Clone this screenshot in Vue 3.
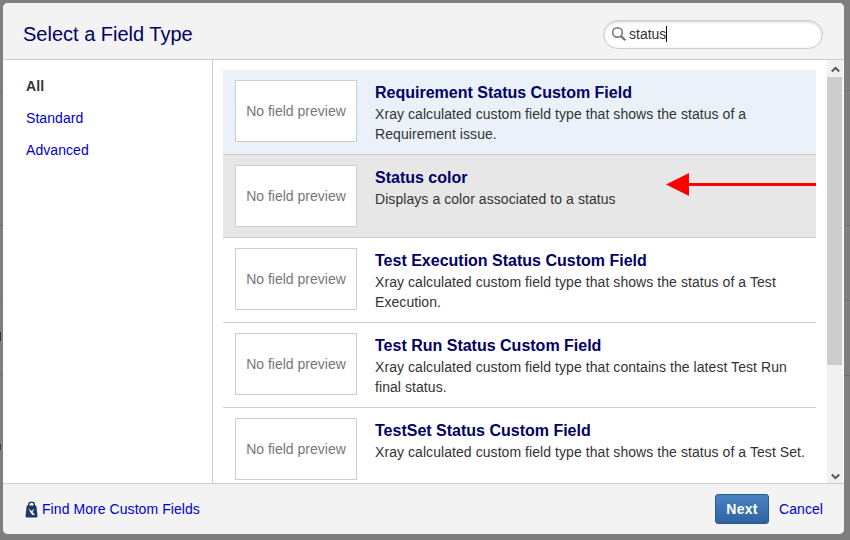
<script setup>
const rows = [
  { title: 'Requirement Status Custom Field', desc: 'Xray calculated custom field type that shows the status of a Requirement issue.', cls: 'selected' },
  { title: 'Status color', desc: 'Displays a color associated to a status', cls: 'hovered' },
  { title: 'Test Execution Status Custom Field', desc: 'Xray calculated custom field type that shows the status of a Test Execution.', cls: '' },
  { title: 'Test Run Status Custom Field', desc: 'Xray calculated custom field type that contains the latest Test Run final status.', cls: '' },
  { title: 'TestSet Status Custom Field', desc: 'Xray calculated custom field type that shows the status of a Test Set.', cls: '' },
]
</script>

<template>
  <div class="page">
    <span class="peek peek-a"></span>
    <span class="peek peek-b"></span>
    <div class="dialog">
      <header class="head">
        <h2>Select a Field Type</h2>
        <div class="search">
          <svg class="glass" width="16" height="16" viewBox="0 0 16 16">
            <circle cx="6.500" cy="6.500" r="4.800" fill="none" stroke="#707070" stroke-width="1.500" />
            <path d="M10 10l4.200 4.200" stroke="#707070" stroke-width="2.200" />
          </svg>
          <span class="q">status</span><span class="caret"></span>
        </div>
      </header>
      <div class="body">
        <nav class="side">
          <a class="cur">All</a>
          <a>Standard</a>
          <a>Advanced</a>
        </nav>
        <div class="main">
          <div class="list">
            <div v-for="r in rows" :key="r.title" class="row" :class="r.cls">
              <div class="preview">No field preview</div>
              <div class="info">
                <h3>{{ r.title }}</h3>
                <p>{{ r.desc }}</p>
              </div>
            </div>
          </div>
          <div class="bar">
            <div class="end top">
              <svg width="15" height="8" viewBox="0 0 15 8"><path d="M3.800 6.500l3.700-3.700 3.700 3.700" fill="none" stroke="#555" stroke-width="2" /></svg>
            </div>
            <div class="track"><div class="thumb"></div></div>
            <div class="end bottom">
              <svg width="15" height="8" viewBox="0 0 15 8"><path d="M3.800 1.500l3.700 3.700 3.700-3.700" fill="none" stroke="#555" stroke-width="2" /></svg>
            </div>
          </div>
          <svg class="arrow" width="152" height="26" viewBox="0 0 152 26">
            <path d="M0 12.500L23 1V11H150V14H23V24Z" fill="#ff0000" />
          </svg>
        </div>
      </div>
      <footer class="foot">
        <a class="more">
          <svg width="13" height="17" viewBox="0 0 13 17">
            <path d="M1.500 6Q1.500 4.500 3 4.200V3.500Q3 .5 6.500 .5T10 3.500V4.200Q11.500 4.500 11.500 6L12.500 15Q12.500 16.500 11 16.500H2Q.5 16.500 .5 15Z" fill="#1d3a66" />
            <path d="M4.500 4.500V3.500Q4.500 1.800 6.500 1.800T8.500 3.500V4.500Z" fill="#fff" />
            <path d="M3.500 7.500l3 2.500 3-2.500-2 3.500 2.500 3H7.500L5.500 11.500Z" fill="#fff" />
          </svg>
          Find More Custom Fields
        </a>
        <div class="actions">
          <button class="next">Next</button>
          <a>Cancel</a>
        </div>
      </footer>
    </div>
  </div>
</template>

<style>
html, body { margin: 0; background: #7f7f7f; }
</style>

<style scoped>
.page {
  position: relative;
  width: 850px;
  height: 540px;
  box-sizing: border-box;
  padding: 3px 6px 6px 3px;
  background-color: #7f7f7f;
  background-image:
    linear-gradient(#6f6f6f, #6f6f6f),
    linear-gradient(#6f6f6f, #6f6f6f),
    linear-gradient(#6f6f6f, #6f6f6f),
    linear-gradient(#6f6f6f, #6f6f6f);
  background-repeat: no-repeat;
  background-size: 100% 1px;
  background-position: 0 90px, 0 225px, 0 300px, 0 375px;
  font-family: "Liberation Sans", Arial, sans-serif;
  font-size: 14px;
  letter-spacing: 0.065px;
  color: #333;
  overflow: hidden;
}
.peek { position: absolute; left: 0; width: 1px; }
.peek-a { top: 332px; height: 9px; background: #3a2a66; }
.peek-b { top: 444px; height: 6px; background: #4a3a3a; }
.dialog {
  height: 100%;
  background: #fff;
  border-radius: 5px;
  display: flex;
  flex-direction: column;
  overflow: hidden;
}
a { color: #0000cc; }
.head {
  height: 57px;
  flex: none;
  box-sizing: border-box;
  background: #f3f3f3;
  border-bottom: 1px solid #ccc;
  display: flex;
  align-items: center;
  justify-content: space-between;
  padding: 6px 21px 0 20px;
}
h2 {
  margin: 0;
  font-size: 20px;
  font-weight: 400;
  color: #000066;
  letter-spacing: 0;
}
.search {
  width: 220px;
  height: 29px;
  box-sizing: border-box;
  border: 1px solid #ccc;
  border-radius: 15px;
  background: #fff;
  box-shadow: inset 0 1px 3px #ccc;
  display: flex;
  align-items: center;
  padding-left: 7px;
}
.glass { flex: none; margin-right: 2px; }
.q { font-size: 14px; letter-spacing: 0; }
.caret { width: 1px; height: 16px; background: #000; }
.body { flex: 1; min-height: 0; display: flex; }
.side {
  width: 210px;
  flex: none;
  box-sizing: border-box;
  border-right: 1px solid #ccc;
  padding: 17px 0 0 23px;
  display: flex;
  flex-direction: column;
  gap: 14px;
  line-height: 18px;
}
.cur { color: #333; font-weight: 700; }
.main { flex: 1; min-width: 0; display: flex; position: relative; }
.list { width: 593px; margin: 10px 0 0 10px; flex: none; overflow: hidden; }
.row {
  box-sizing: border-box;
  height: 85px;
  display: flex;
  border-bottom: 1px solid #ccc;
  padding: 10px 4px 10px 12px;
}
.selected { background: #ebf1f9; }
.hovered { background: #e7e7e7; height: 83px; }
.row:last-child { border-bottom: 0; }
.preview {
  width: 122px;
  height: 62px;
  flex: none;
  box-sizing: border-box;
  border: 1px solid #ccc;
  background: #fff;
  color: #777;
  letter-spacing: 0;
  display: flex;
  align-items: center;
  justify-content: center;
}
.info { margin-left: 18px; padding-top: 3px; min-width: 0; }
h3 {
  margin: 0;
  font-size: 16px;
  line-height: 20px;
  font-weight: 700;
  color: #000066;
  letter-spacing: 0;
}
p { margin: 1px 0 0; line-height: 20px; }
.bar {
  width: 16px;
  margin-left: 11px;
  flex: none;
  display: flex;
  flex-direction: column;
  background: #f1f1f1;
}
.end { flex: none; display: flex; justify-content: center; height: 17px; box-sizing: border-box; }
.top { padding-top: 5px; }
.bottom { padding-top: 6px; height: 16px; }
.track { flex: 1; }
.thumb { height: 288px; width: 15px; background: #cdcdcd; }
.arrow { position: absolute; left: 453px; top: 112px; }
.foot {
  height: 51px;
  flex: none;
  box-sizing: border-box;
  background: #f3f3f3;
  border-top: 1px solid #ccc;
  display: flex;
  align-items: center;
  justify-content: space-between;
  padding: 0 21px 0 22px;
}
.more { display: flex; align-items: center; gap: 4px; }
.actions { display: flex; align-items: center; gap: 10px; }
.next {
  width: 54px;
  height: 30px;
  border: 1px solid #2a5a8c;
  border-radius: 3px;
  background: linear-gradient(#4a83c4, #2d639f);
  color: #fff;
  font: 700 14px "Liberation Sans", Arial, sans-serif;
  letter-spacing: 0.3px;
  padding: 0;
}
</style>
